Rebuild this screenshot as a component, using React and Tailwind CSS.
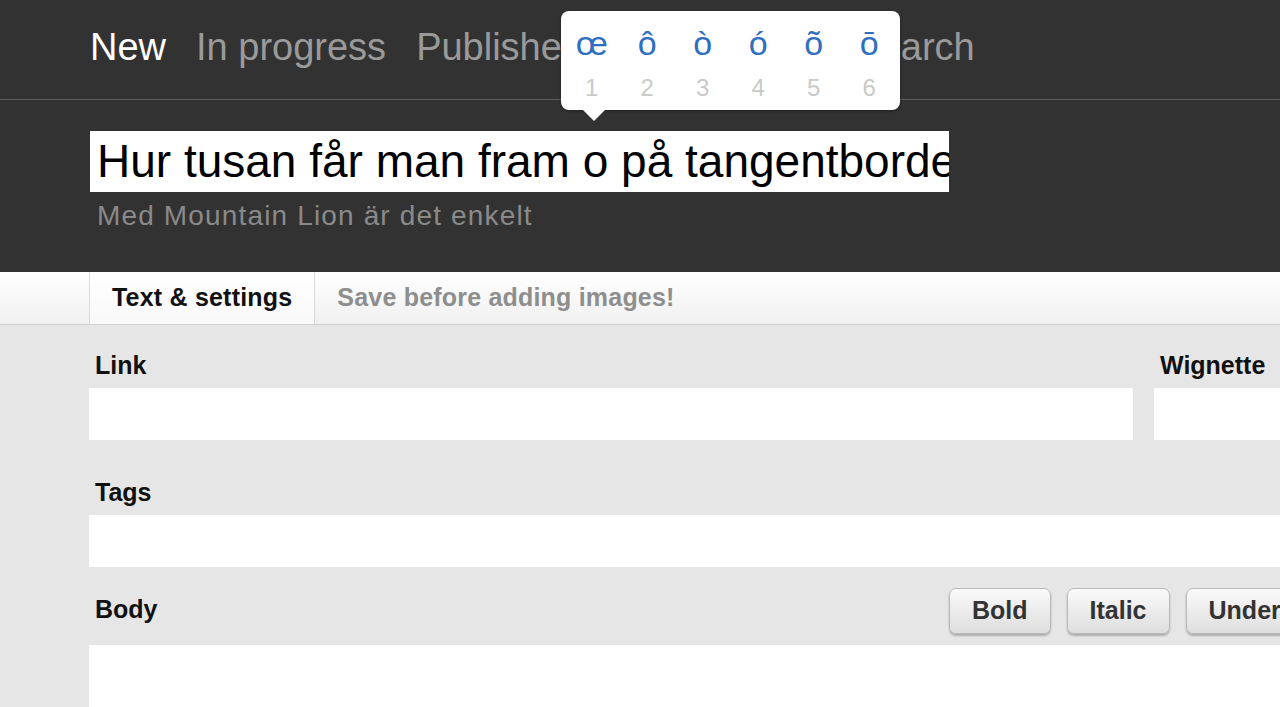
import React from 'react';

const chars = ['œ', 'ô', 'ò', 'ó', 'õ', 'ō'];

function AccentPopup() {
  return (
    <div className="absolute left-[561px] top-[11px] z-10">
      <div className="relative bg-white rounded-[8px] w-[339px] h-[99px] px-[3px] shadow-[0_1px_3px_rgba(0,0,0,0.35)] grid grid-cols-6">
        {chars.map((c, i) => (
          <div key={c} className="flex flex-col items-center">
            <span className="mt-[12px] text-[34px] leading-[40px] text-[#2f6fbf]">{c}</span>
            <span className="mt-[12px] text-[24px] leading-[26px] text-[#c9c9c9]">{i + 1}</span>
          </div>
        ))}
        {/* pointer */}
        <div className="absolute left-[21px] -bottom-[11px] w-0 h-0 border-l-[12px] border-r-[12px] border-t-[12px] border-l-transparent border-r-transparent border-t-white" />
      </div>
    </div>
  );
}

function Field({ label, className = '' }) {
  return (
    <div className={className}>
      <div className="text-[25px] leading-[26px] font-bold text-[#111] pl-[6px]">{label}</div>
      <div className="mt-[10px] h-[52px] bg-white" />
    </div>
  );
}

function ToolButton({ children }) {
  return (
    <button className="h-[46px] px-[22px] rounded-[7px] border border-[#b9b9b9] bg-gradient-to-b from-[#fafafa] to-[#dedede] shadow-[0_2px_2px_rgba(0,0,0,0.25)] text-[25px] font-bold text-[#333] whitespace-nowrap">
      {children}
    </button>
  );
}

export default function App() {
  return (
    <div className="w-[1280px] h-[707px] overflow-hidden bg-[#e6e6e6] font-['Liberation_Sans',Arial,sans-serif]">
      {/* dark header */}
      <div className="relative bg-[#323232] h-[272px]">
        <nav className="h-[100px] border-b border-[#5e5e5e] flex items-center gap-[30px] pl-[90px] pb-[4px] text-[38px]">
          <span className="text-white">New</span>
          <span className="text-[#9a9a9a]">In progress</span>
          <span className="text-[#9a9a9a]">Published</span>
          <span className="text-[#9a9a9a]">Unpublished</span>
          <span className="text-[#9a9a9a]">Search</span>
        </nav>
        <AccentPopup />
        <div className="pl-[90px] pt-[31px]">
          <div className="w-[859px] h-[61px] bg-white overflow-hidden whitespace-nowrap pl-[7px] text-[46px] leading-[61px] text-black">
            Hur tusan får man fram o på tangentbordet?
          </div>
          <div className="mt-[8px] pl-[7px] text-[28px] leading-[32px] tracking-[1.15px] text-[#8a8a8a]">
            Med Mountain Lion är det enkelt
          </div>
        </div>
      </div>

      {/* tabs */}
      <div className="h-[53px] bg-gradient-to-b from-white to-[#f0f0f0] border-b border-[#d2d2d2] flex pl-[89px]">
        <div className="h-full px-[22px] border-l border-r border-[#d9d9d9] bg-white/60 flex items-center text-[25px] tracking-[0.2px] font-bold text-[#111]">
          Text &amp; settings
        </div>
        <div className="h-full px-[22px] flex items-center text-[25px] tracking-[0.2px] font-bold text-[#8e8e8e]">
          Save before adding images!
        </div>
      </div>

      {/* form */}
      <div className="pl-[89px] pt-[27px]">
        <div className="flex gap-[21px]">
          <Field label="Link" className="w-[1044px] shrink-0" />
          <Field label="Wignette" className="flex-1" />
        </div>
        <Field label="Tags" className="mt-[39px]" />
        <div className="mt-[21px] flex items-center">
          <div className="flex-1 text-[25px] leading-[26px] font-bold text-[#111] pl-[6px] -mt-[4px]">Body</div>
          <div className="flex gap-[16px] -mr-[200px] w-[531px]">
            <ToolButton>Bold</ToolButton>
            <ToolButton>Italic</ToolButton>
            <ToolButton>Underline</ToolButton>
          </div>
        </div>
        <div className="mt-[11px] h-[200px] bg-white" />
      </div>
    </div>
  );
}
